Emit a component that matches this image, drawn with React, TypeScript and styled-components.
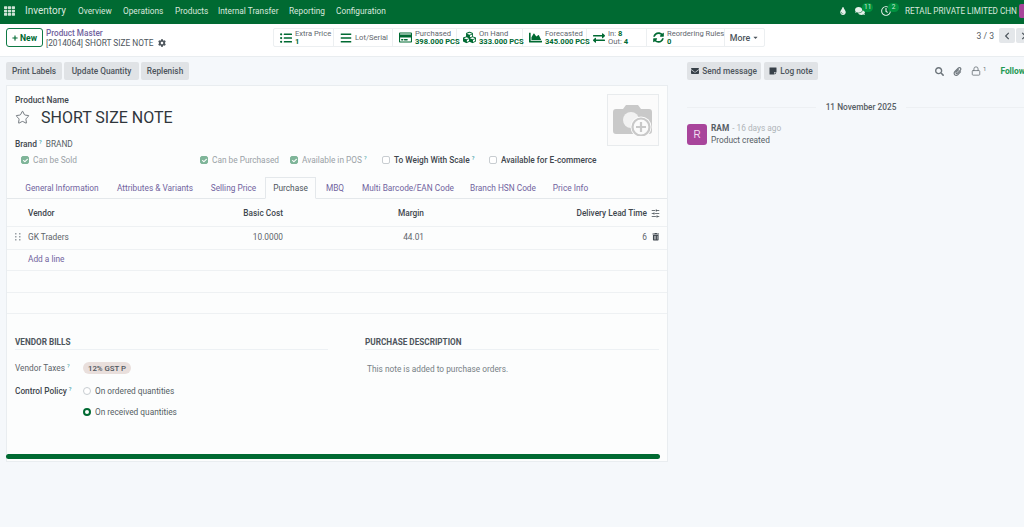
import React from "react";
import styled, { createGlobalStyle } from "styled-components";
import {
  FaPlus, FaCog, FaListUl, FaBars, FaRegCreditCard, FaCubes, FaChartArea, FaExchangeAlt, FaSyncAlt,
  FaTint, FaComments, FaRegClock, FaChevronLeft, FaChevronRight, FaEnvelope, FaStickyNote, FaSearch,
  FaPaperclip, FaTrashAlt, FaCaretDown, FaTh, FaCheck,
} from "react-icons/fa";
import { LuLock, LuSlidersHorizontal, LuStar } from "react-icons/lu";

const Global = createGlobalStyle`
  html, body { margin: 0; padding: 0; background: #f5f8fb; }
  body { font-family: Roboto, "Noto Sans", sans-serif; font-size: 8.3px; color: #555d64; }
  * { box-sizing: border-box; }
`;

const Page = styled.div`
  width: 1024px; height: 527px; overflow: hidden; display: flex; flex-direction: column; background: #f5f8fb;
`;
const Navbar = styled.header`
  height: 24px; flex: none; background: #006a32; display: flex; align-items: center; padding: 0 0 3px 4px; color: #d9e8de;
`;
const AppsIcon = styled.span`
  display: flex; width: 11px; height: 11px; margin-right: 10px; color: #cfe3d6; font-size: 12px; align-items: center;
`;
const Brand = styled.span`font-size: 10px; width: 53px;`;
const NavItem = styled.span<{ $w: number }>`width: ${(p) => p.$w}px; white-space: nowrap;`;
const NavRight = styled.div`
  margin-left: auto; margin-right: -9px; display: flex; align-items: center; height: 100%;
`;
const NavIcon = styled.span<{ $w?: number }>`
  position: relative; display: flex; align-items: center; font-size: 10px; color: #e6f0ea; width: ${(p) => p.$w ?? 26}px;
`;
const NavBadge = styled.span`
  position: absolute; left: 7px; top: -3px; height: 9px; min-width: 11px; padding: 0 2px; border-radius: 5px;
  background: #00913f; color: #cfe8d8; font-size: 6.5px; line-height: 9px; text-align: center;
`;
const Company = styled.span`margin-left: -2px; width: 114px; white-space: nowrap; font-size: 8.2px;`;
const NavAvatar = styled.span`width: 14px; height: 14px; background: #a8459b; border-radius: 2px;`;

const ControlPanel = styled.div`
  height: 33px; flex: none; background: #fff; border-bottom: 1px solid #e9edf0; display: flex; align-items: flex-start; padding: 4px 0 0 6px;
`;
const NewButton = styled.button`
  width: 37px; height: 19px; flex: none; padding: 0; display: flex; align-items: center; justify-content: center; gap: 2px;
  background: #fff; border: 1px solid #0f7a45; border-radius: 3px; color: #006a32; font: 700 8.6px Roboto, sans-serif;
`;
const Crumbs = styled.div`margin-left: 3px; width: 227px; line-height: 9.5px; padding-top: 1px;`;
const CrumbLink = styled.div`color: #71639e; font-weight: 500; font-size: 8.2px;`;
const CrumbTitle = styled.div`
  display: flex; align-items: center; gap: 5px; color: #4d555c; font-size: 8.3px;
  svg { color: #4d555c; font-size: 8px; }
`;
const Stats = styled.div`
  display: flex; height: 19px; background: #fff; border: 1px solid #eceff1; border-radius: 2px;
`;
const Stat = styled.div<{ $w: number }>`
  width: ${(p) => p.$w}px; display: flex; align-items: center; gap: 2px; padding-left: 6px; border-right: 1px solid #eceff1; line-height: 8px; flex: none;
`;
const StatIcon = styled.span<{ $size?: number }>`
  display: flex; color: #006a32; font-size: ${(p) => p.$size ?? 12}px; flex: none; margin-right: 1px;
`;
const StatText = styled.div`font-size: 7.6px; color: #5f676e; white-space: nowrap;`;
const StatValue = styled.div`color: #006a32; font-weight: 700; font-size: 7.6px; white-space: nowrap;`;
const InlineValue = styled.span`color: #006a32; font-weight: 700;`;
const MoreStat = styled.div`
  width: 39px; display: flex; align-items: center; justify-content: center; gap: 2px; font-weight: 500; font-size: 8.8px; color: #4d555c;
  svg { font-size: 7px; }
`;
const Pager = styled.div`margin-left: auto; display: flex; align-items: center; margin-right: -9px; height: 15px;`;
const PagerText = styled.span`font-size: 8.6px; margin-right: 5px;`;
const PagerButton = styled.span`
  width: 16px; height: 15px; background: #e4e7ea; border-radius: 2px; margin-right: 1px; display: flex; align-items: center; justify-content: center;
  font-size: 8px; color: #4d555c;
`;

const Body = styled.main`flex: 1; display: flex; min-height: 0;`;
const FormColumn = styled.section`width: 668px; flex: none; margin-left: 6px; padding-top: 5px;`;
const Actions = styled.div`display: flex; gap: 2px; height: 18px;`;
const ActionButton = styled.button<{ $w: number }>`
  width: ${(p) => p.$w}px; height: 18px; flex: none; padding: 0; border: 0; border-radius: 2px; background: #e0e3e6; color: #4d555c; white-space: nowrap;
  font: 500 8.3px Roboto, sans-serif; display: flex; align-items: center; justify-content: center; gap: 3px;
  svg { font-size: 8px; color: #374048; }
`;
const Sheet = styled.div`
  width: 662px; height: 377px; margin-top: 5px; background: #fcfdfd; border: 1px solid #e9edf0; position: relative; display: flex; flex-direction: column;
`;
const Title = styled.div`padding: 9px 8px 0; height: 91px; flex: none; position: relative; display: flex; flex-direction: column;`;
const FieldLabelStrong = styled.div`font-weight: 500; color: #3f474e; font-size: 8.4px; line-height: 10px;`;
const NameRow = styled.div`display: flex; align-items: center; height: 24px;`;
const Star = styled.span`display: flex; color: #555d64; width: 26px;`;
const ProductName = styled.div`font-size: 16px; color: #2f363c;`;
const BrandRow = styled.div`display: flex; align-items: center; margin-top: 9px; height: 11px; gap: 4px;`;
const Help = styled.sup`font-size: 5.6px; color: #38a0a8; line-height: 0; margin-left: 2px; vertical-align: 3px;`;
const Flags = styled.div`display: flex; margin-top: 5px; padding-left: 6px; height: 12px;`;
const Flag = styled.div<{ $w: number; $dim?: boolean; $strong?: boolean }>`
  width: ${(p) => p.$w}px; flex: none; display: flex; align-items: center; gap: 4px; white-space: nowrap;
  color: ${(p) => (p.$dim ? "#9aa1a6" : "#3f474e")}; font-weight: ${(p) => (p.$strong ? 500 : 400)};
`;
const Check = styled.span<{ $on?: boolean }>`
  width: 8px; height: 8px; border-radius: 2px; display: flex; align-items: center; justify-content: center; flex: none;
  background: ${(p) => (p.$on ? "#7fb599" : "#fff")}; border: 1px solid ${(p) => (p.$on ? "#7fb599" : "#c8cdd1")};
  color: #fff; font-size: 5px;
`;
const ImageBox = styled.div`
  position: absolute; right: 8px; top: 8px; width: 52px; height: 52px; border: 1px solid #e8ebed; background: #fbfbfb;
  display: flex; align-items: center; justify-content: center;
`;
const Tabs = styled.nav`display: flex; padding-left: 9px; height: 22px; flex: none; border-bottom: 1px solid #e4e8eb;`;
const Tab = styled.div<{ $w: number; $active?: boolean }>`
  width: ${(p) => p.$w}px; height: 22px; display: flex; align-items: center; justify-content: center; white-space: nowrap;
  color: ${(p) => (p.$active ? "#4d555c" : "#71639e")}; background: ${(p) => (p.$active ? "#fcfdfd" : "transparent")};
  border: 1px solid ${(p) => (p.$active ? "#e4e8eb" : "transparent")}; border-bottom-color: ${(p) => (p.$active ? "#fcfdfd" : "transparent")};
  padding-bottom: 1px;
`;
const Row = styled.div<{ $h: number; $bold?: boolean }>`
  display: grid; grid-template-columns: 21px 125px 130px 141px 223px 1fr; height: ${(p) => p.$h}px; align-items: center; flex: none;
  border-bottom: 1px solid #eef1f3; font-weight: ${(p) => (p.$bold ? 500 : 400)}; color: ${(p) => (p.$bold ? "#3f474e" : "#5c646a")};
  padding: ${(p) => (p.$bold ? "1px 0 0" : "0 0 2px")};
`;
const Num = styled.span`text-align: right;`;
const GripCell = styled.span`display: flex; justify-content: center; color: #9aa1a6;`;
const ActionCell = styled.span`display: flex; justify-content: center; font-size: 7.5px; color: #3f474e; padding-right: 3px;`;
const AddLine = styled.span`color: #71639e; grid-column: 2;`;
const Lower = styled.div`display: grid; grid-template-columns: 313px 294px; column-gap: 37px; padding: 23px 8px 0;`;
const SectionHead = styled.div`
  font-weight: 700; font-size: 8.2px; color: #4d555c; height: 13px; border-bottom: 1px solid #edf1f4; line-height: 10px;
`;
const FormRow = styled.div<{ $top: number }>`display: flex; align-items: center; margin-top: ${(p) => p.$top}px; height: 12px;`;
const FieldLabel = styled.div<{ $strong?: boolean }>`
  width: 68px; flex: none; font-weight: ${(p) => (p.$strong ? 500 : 400)}; color: ${(p) => (p.$strong ? "#3f474e" : "#5c646a")};
`;
const Tag = styled.span`
  height: 12px; width: 48px; border-radius: 6px; background: #e9dfdc; color: #4d555c; font-weight: 500; font-size: 7.8px;
  display: flex; align-items: center; justify-content: center;
`;
const Radio = styled.span<{ $on?: boolean }>`
  width: 8px; height: 8px; border-radius: 50%; flex: none; margin-right: 4px; background: #fff;
  border: ${(p) => (p.$on ? "2.5px solid #006a32" : "1px solid #c8cdd1")};
`;
const Description = styled.div`margin-top: 14px; padding-left: 2px; color: #777f85;`;
const Bar = styled.div`
  position: absolute; left: -1px; bottom: 2px; width: 654px; height: 5px; border-radius: 3px; background: #006a32;
`;

const Chatter = styled.aside`flex: none; width: 348px; margin-left: 13px; padding-top: 5px;`;
const ChatterTop = styled.div`display: flex; align-items: center; height: 18px; gap: 3px;`;
const ChatterTools = styled.div`
  margin-left: 114px; display: flex; align-items: center; color: #6d757b; font-size: 9px; gap: 9px; flex: none;
`;
const Followers = styled.span`display: flex; align-items: flex-start; font-size: 10px;`;
const FollowerCount = styled.span`font-size: 6px; margin-left: 2px; line-height: 6px;`;
const Follow = styled.span`color: #1d9a54; font-weight: 700; margin-left: 5px; font-size: 8.4px;`;
const DateLine = styled.div`
  display: flex; align-items: center; gap: 10px; margin-top: 21px; font-weight: 500; color: #555d64; font-size: 8.3px; height: 12px;
  &::before, &::after { content: ""; flex: 1; height: 1px; background: #edf0f3; }
`;
const Message = styled.div`display: flex; gap: 4px; margin-top: 11px;`;
const Avatar = styled.div`
  width: 20px; height: 21px; border-radius: 3px; background: #a8459b; color: #f3dff0; display: flex; align-items: center; justify-content: center;
  font: 10px "Liberation Sans", sans-serif;
`;
const MessageHead = styled.div`display: flex; gap: 3px; line-height: 11px; margin-top: -1px; color: #b0b5b9;`;
const Author = styled.span`font-weight: 700; color: #555d64;`;
const MessageBody = styled.div`line-height: 12px; color: #555d64;`;

const Grip = () => (
  <svg width="6" height="8" viewBox="0 0 6 8" fill="currentColor">
    {[0, 3, 6].map((y) => [0, 4].map((x) => <rect key={`${x}-${y}`} x={x} y={y} width="1.5" height="1.5" />))}
  </svg>
);

const CameraPlaceholder = () => (
  <svg width="40" height="32" viewBox="0 0 40 32">
    <path d="M3 5h7l3-4h12l3 4h8a3 3 0 0 1 3 3v19a3 3 0 0 1-3 3H3a3 3 0 0 1-3-3V8a3 3 0 0 1 3-3z" fill="#c9c9c9" />
    <circle cx="18" cy="16" r="8" fill="#f2f2f2" />
    <circle cx="28" cy="23" r="10.5" fill="#fbfbfb" />
    <circle cx="28" cy="23" r="8.5" fill="#fbfbfb" stroke="#c9c9c9" strokeWidth="2.2" />
    <path d="M28 18v10M23 23h10" stroke="#c9c9c9" strokeWidth="2.2" />
  </svg>
);

const stats = [
  { w: 60, icon: <FaListUl />, label: "Extra Price", value: "1" },
  { w: 59, icon: <FaBars />, label: "Lot/Serial" },
  { w: 64, icon: <FaRegCreditCard size={13} />, label: "Purchased", value: "398.000 PCS" },
  { w: 66, icon: <FaCubes size={13} />, label: "On Hand", value: "333.000 PCS" },
  { w: 64, icon: <FaChartArea size={13} />, label: "Forecasted", value: "345.000 PCS" },
];
const tabs = [
  ["General Information", 92], ["Attributes & Variants", 94], ["Selling Price", 63], ["Purchase", 51],
  ["MBQ", 38], ["Multi Barcode/EAN Code", 108], ["Branch HSN Code", 82], ["Price Info", 53],
] as const;
const navItems = [["Overview", 45], ["Operations", 52], ["Products", 43], ["Internal Transfer", 71], ["Reporting", 47], ["Configuration", 70]] as const;

export default function App() {
  return (
    <Page>
      <Global />
      <Navbar>
        <AppsIcon><FaTh /></AppsIcon>
        <Brand>Inventory</Brand>
        {navItems.map(([t, w]) => <NavItem key={t} $w={w}>{t}</NavItem>)}
        <NavRight>
          <NavIcon $w={16}><FaTint size={8} /></NavIcon>
          <NavIcon><FaComments /><NavBadge>11</NavBadge></NavIcon>
          <NavIcon><FaRegClock /><NavBadge>2</NavBadge></NavIcon>
          <Company>RETAIL PRIVATE LIMITED CHN</Company>
          <NavAvatar />
        </NavRight>
      </Navbar>
      <ControlPanel>
        <NewButton><FaPlus size={6} />New</NewButton>
        <Crumbs>
          <CrumbLink>Product Master</CrumbLink>
          <CrumbTitle>[2014064] SHORT SIZE NOTE <FaCog /></CrumbTitle>
        </Crumbs>
        <Stats>
          {stats.map((s) => (
            <Stat key={s.label} $w={s.w}>
              <StatIcon>{s.icon}</StatIcon>
              <div>
                <StatText>{s.label}</StatText>
                {s.value && <StatValue>{s.value}</StatValue>}
              </div>
            </Stat>
          ))}
          <Stat $w={60}>
            <StatIcon><FaExchangeAlt /></StatIcon>
            <div>
              <StatText>In: <InlineValue>8</InlineValue></StatText>
              <StatText>Out: <InlineValue>4</InlineValue></StatText>
            </div>
          </Stat>
          <Stat $w={78}>
            <StatIcon $size={11}><FaSyncAlt /></StatIcon>
            <div>
              <StatText>Reordering Rules</StatText>
              <StatValue>0</StatValue>
            </div>
          </Stat>
          <MoreStat>More <FaCaretDown /></MoreStat>
        </Stats>
        <Pager>
          <PagerText>3 / 3</PagerText>
          <PagerButton><FaChevronLeft /></PagerButton>
          <PagerButton><FaChevronRight /></PagerButton>
        </Pager>
      </ControlPanel>
      <Body>
        <FormColumn>
          <Actions>
            <ActionButton $w={56}>Print Labels</ActionButton>
            <ActionButton $w={75}>Update Quantity</ActionButton>
            <ActionButton $w={48}>Replenish</ActionButton>
          </Actions>
          <Sheet>
            <Title>
              <FieldLabelStrong>Product Name</FieldLabelStrong>
              <NameRow>
                <Star><LuStar size={15} strokeWidth={1.3} /></Star>
                <ProductName>SHORT SIZE NOTE</ProductName>
              </NameRow>
              <BrandRow><FieldLabelStrong>Brand<Help>?</Help></FieldLabelStrong> BRAND</BrandRow>
              <Flags>
                <Flag $w={179} $dim><Check $on><FaCheck /></Check>Can be Sold</Flag>
                <Flag $w={90} $dim><Check $on><FaCheck /></Check>Can be Purchased</Flag>
                <Flag $w={92} $dim><Check $on><FaCheck /></Check><span>Available in POS<Help>?</Help></span></Flag>
                <Flag $w={107} $strong><Check /><span>To Weigh With Scale<Help>?</Help></span></Flag>
                <Flag $w={120} $strong><Check />Available for E-commerce</Flag>
              </Flags>
              <ImageBox><CameraPlaceholder /></ImageBox>
            </Title>
            <Tabs>
              {tabs.map(([t, w]) => <Tab key={t} $w={w} $active={t === "Purchase"}>{t}</Tab>)}
            </Tabs>
            <Row $h={28} $bold>
              <span />
              <span>Vendor</span>
              <Num>Basic Cost</Num>
              <Num>Margin</Num>
              <Num>Delivery Lead Time</Num>
              <ActionCell><LuSlidersHorizontal size={9} /></ActionCell>
            </Row>
            <Row $h={23}>
              <GripCell><Grip /></GripCell>
              <span>GK Traders</span>
              <Num>10.0000</Num>
              <Num>44.01</Num>
              <Num>6</Num>
              <ActionCell><FaTrashAlt /></ActionCell>
            </Row>
            <Row $h={21}><AddLine>Add a line</AddLine></Row>
            <Row $h={22} />
            <Row $h={21} />
            <Lower>
              <div>
                <SectionHead>VENDOR BILLS</SectionHead>
                <FormRow $top={12}>
                  <FieldLabel>Vendor Taxes<Help>?</Help></FieldLabel>
                  <Tag>12% GST P</Tag>
                </FormRow>
                <FormRow $top={11}>
                  <FieldLabel $strong>Control Policy<Help>?</Help></FieldLabel>
                  <Radio />On ordered quantities
                </FormRow>
                <FormRow $top={9}>
                  <FieldLabel />
                  <Radio $on />On received quantities
                </FormRow>
              </div>
              <div>
                <SectionHead>PURCHASE DESCRIPTION</SectionHead>
                <Description>This note is added to purchase orders.</Description>
              </div>
            </Lower>
            <Bar />
          </Sheet>
        </FormColumn>
        <Chatter>
          <ChatterTop>
            <ActionButton $w={74}><FaEnvelope />Send message</ActionButton>
            <ActionButton $w={54}><FaStickyNote />Log note</ActionButton>
            <ChatterTools>
              <FaSearch />
              <FaPaperclip />
              <Followers><LuLock size={10} /><FollowerCount>1</FollowerCount></Followers>
              <Follow>Follow</Follow>
            </ChatterTools>
          </ChatterTop>
          <DateLine>11 November 2025</DateLine>
          <Message>
            <Avatar>R</Avatar>
            <div>
              <MessageHead><Author>RAM</Author> - 16 days ago</MessageHead>
              <MessageBody>Product created</MessageBody>
            </div>
          </Message>
        </Chatter>
      </Body>
    </Page>
  );
}
